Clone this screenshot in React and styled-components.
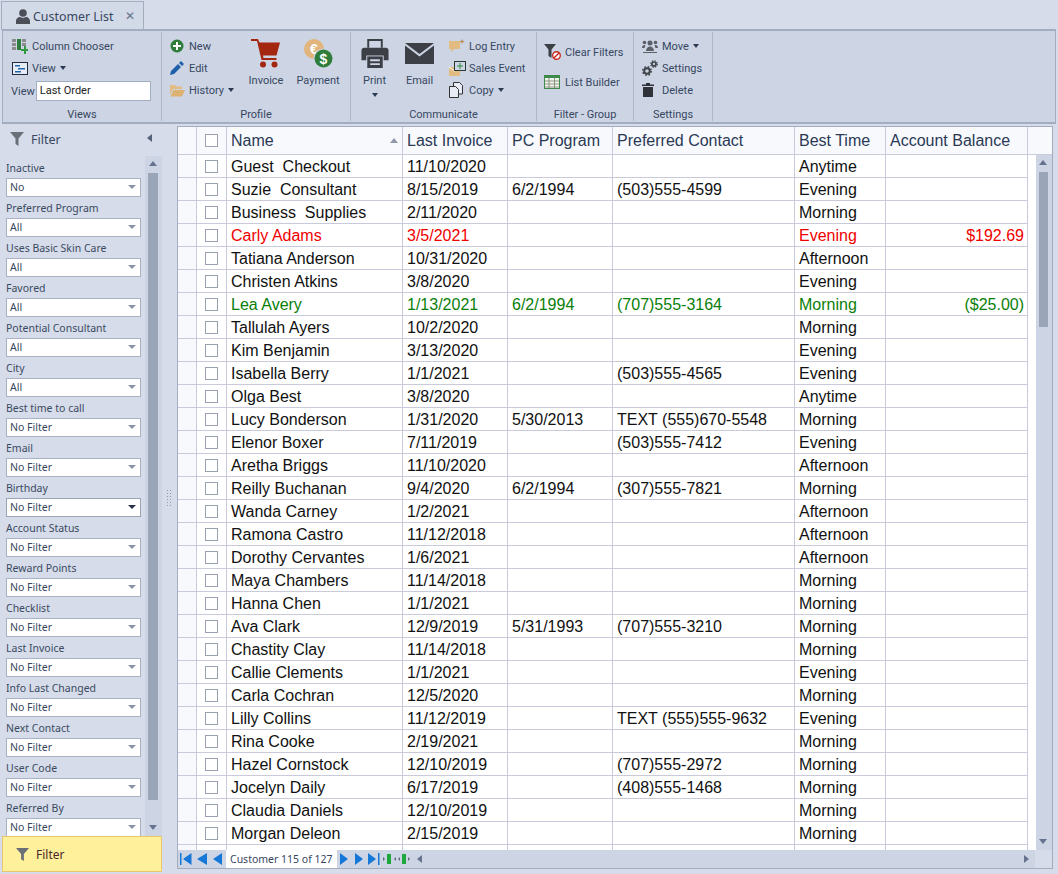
import styled, { createGlobalStyle } from "styled-components";

const GlobalStyle = createGlobalStyle`
  html, body {
    margin: 0;
    padding: 0;
    background: #d6dce9;
    overflow: hidden;
  }
  * { box-sizing: border-box; }
`;

const uiFont = `"Noto Sans", "Open Sans", sans-serif`;

const filters = [
  ["Inactive", "No"],
  ["Preferred Program", "All"],
  ["Uses Basic Skin Care", "All"],
  ["Favored", "All"],
  ["Potential Consultant", "All"],
  ["City", "All"],
  ["Best time to call", "No Filter"],
  ["Email", "No Filter"],
  ["Birthday", "No Filter", true],
  ["Account Status", "No Filter"],
  ["Reward Points", "No Filter"],
  ["Checklist", "No Filter"],
  ["Last Invoice", "No Filter"],
  ["Info Last Changed", "No Filter"],
  ["Next Contact", "No Filter"],
  ["User Code", "No Filter"],
  ["Referred By", "No Filter"],
];

const columns = [
  { title: "Name", width: 176 },
  { title: "Last Invoice", width: 105 },
  { title: "PC Program", width: 105 },
  { title: "Preferred Contact", width: 182 },
  { title: "Best Time", width: 91 },
  { title: "Account Balance", width: 142 },
];

const customers = [
  ["Guest  Checkout", "11/10/2020", "", "", "Anytime", ""],
  ["Suzie  Consultant", "8/15/2019", "6/2/1994", "(503)555-4599", "Evening", ""],
  ["Business  Supplies", "2/11/2020", "", "", "Morning", ""],
  ["Carly Adams", "3/5/2021", "", "", "Evening", "$192.69", "#f00000"],
  ["Tatiana Anderson", "10/31/2020", "", "", "Afternoon", ""],
  ["Christen Atkins", "3/8/2020", "", "", "Evening", ""],
  ["Lea Avery", "1/13/2021", "6/2/1994", "(707)555-3164", "Morning", "($25.00)", "#0a800a"],
  ["Tallulah Ayers", "10/2/2020", "", "", "Morning", ""],
  ["Kim Benjamin", "3/13/2020", "", "", "Evening", ""],
  ["Isabella Berry", "1/1/2021", "", "(503)555-4565", "Evening", ""],
  ["Olga Best", "3/8/2020", "", "", "Anytime", ""],
  ["Lucy Bonderson", "1/31/2020", "5/30/2013", "TEXT (555)670-5548", "Morning", ""],
  ["Elenor Boxer", "7/11/2019", "", "(503)555-7412", "Evening", ""],
  ["Aretha Briggs", "11/10/2020", "", "", "Afternoon", ""],
  ["Reilly Buchanan", "9/4/2020", "6/2/1994", "(307)555-7821", "Morning", ""],
  ["Wanda Carney", "1/2/2021", "", "", "Afternoon", ""],
  ["Ramona Castro", "11/12/2018", "", "", "Afternoon", ""],
  ["Dorothy Cervantes", "1/6/2021", "", "", "Afternoon", ""],
  ["Maya Chambers", "11/14/2018", "", "", "Morning", ""],
  ["Hanna Chen", "1/1/2021", "", "", "Morning", ""],
  ["Ava Clark", "12/9/2019", "5/31/1993", "(707)555-3210", "Morning", ""],
  ["Chastity Clay", "11/14/2018", "", "", "Morning", ""],
  ["Callie Clements", "1/1/2021", "", "", "Evening", ""],
  ["Carla Cochran", "12/5/2020", "", "", "Morning", ""],
  ["Lilly Collins", "11/12/2019", "", "TEXT (555)555-9632", "Evening", ""],
  ["Rina Cooke", "2/19/2021", "", "", "Morning", ""],
  ["Hazel Cornstock", "12/10/2019", "", "(707)555-2972", "Morning", ""],
  ["Jocelyn Daily", "6/17/2019", "", "(408)555-1468", "Morning", ""],
  ["Claudia Daniels", "12/10/2019", "", "", "Morning", ""],
  ["Morgan Deleon", "2/15/2019", "", "", "Morning", ""],
  ["", "", "", "", "", ""],
];

const Shell = styled.div`
  position: relative;
  width: 1058px;
  height: 874px;
  overflow: hidden;
  background: #d6dce9;
  font-family: ${uiFont};
  font-size: 11px;
  color: #2b3a52;
`;

const TabStrip = styled.div`
  height: 29px;
  padding: 1px 0 0 1px;
`;

const Tab = styled.div`
  width: 143px;
  height: 29px;
  display: flex;
  align-items: center;
  padding-left: 14px;
  gap: 3px;
  background: #d2d9e7;
  border: 1px solid #a3adc0;
  border-bottom: none;
  font-size: 12.4px;
  color: #37475f;
`;

const TabClose = styled.span`
  margin-left: 9px;
  font-size: 12px;
  line-height: 1;
  color: #66738a;
`;

const Ribbon = styled.div`
  position: absolute;
  left: 2px;
  top: 29px;
  width: 1054px;
  height: 95px;
  display: flex;
  background: #cdd5e5;
  border: 1px solid #a3adc0;
  border-width: 2px 1px;
  font-family: Roboto, "Noto Sans", sans-serif;
  font-size: 11px;
`;

const Group = styled.div`
  position: relative;
  flex: 0 0 ${(p) => p.$width}px;
  height: 89px;
  margin-top: 1px;
  padding-top: 1px;
  border-right: 1px solid #aeb8ca;
  display: flex;
  padding-left: ${(p) => p.$pad || 0}px;
`;

const GroupLabel = styled.div`
  position: absolute;
  left: 0;
  right: 0;
  top: 75px;
  text-align: center;
  line-height: 15px;
  color: #37475f;
`;

const SmallStack = styled.div`
  display: flex;
  flex-direction: column;
  padding-top: ${(p) => p.$top || 2}px;
  gap: ${(p) => p.$gap || 0}px;
  margin-left: ${(p) => p.$left || 0}px;
  width: ${(p) => (p.$width ? `${p.$width}px` : "auto")};
`;

const SmallButton = styled.div`
  height: 22px;
  display: flex;
  align-items: center;
  white-space: nowrap;
  color: #37475f;
  svg { flex: none; margin-right: ${(p) => p.$gap || 4}px; }
`;

const LargeButton = styled.div`
  width: ${(p) => p.$width}px;
  padding-top: 3px;
  display: flex;
  flex-direction: column;
  align-items: center;
  color: #37475f;
  line-height: 15px;
`;

const LargeIcon = styled.div`
  height: 37px;
  padding-bottom: 3px;
  display: flex;
  align-items: center;
  justify-content: center;
`;

const Caret = styled.span`
  display: inline-block;
  margin-left: 4px;
  width: 0;
  height: 0;
  border-left: 3.5px solid transparent;
  border-right: 3.5px solid transparent;
  border-top: 4px solid #2b3a52;
`;

const BlockCaret = styled(Caret)`
  margin: 5px 0 0;
`;

const ViewRow = styled.div`
  height: 20px;
  margin: 2px 0 0 -1px;
  display: flex;
  align-items: center;
  color: #37475f;
`;

const ViewInput = styled.div`
  width: 115px;
  height: 20px;
  margin-left: 1px;
  padding-left: 3px;
  line-height: 18px;
  background: #fff;
  border: 1px solid #a3adc0;
  color: #222;
`;

const FilterPanel = styled.div`
  position: absolute;
  left: 0;
  top: 124px;
  width: 162px;
  height: 748px;
  overflow: hidden;
`;

const PanelHead = styled.div`
  height: 30px;
  display: flex;
  align-items: center;
  padding-left: 10px;
  gap: 7px;
  font-size: 12.5px;
  color: #37475f;
`;

const CollapseArrow = styled.span`
  position: absolute;
  left: 147px;
  top: 10px;
  width: 0;
  height: 0;
  border-top: 4px solid transparent;
  border-bottom: 4px solid transparent;
  border-right: 5px solid #55627a;
`;

const FilterList = styled.div`
  position: absolute;
  left: 6px;
  top: 37px;
  width: 135px;
`;

const FilterField = styled.div`
  height: 40px;
`;

const FilterName = styled.div`
  height: 17px;
  line-height: 15px;
  font-size: 10.5px;
  color: #3a4a62;
  white-space: nowrap;
`;

const FilterSelect = styled.div`
  position: relative;
  height: 19px;
  padding-left: 3px;
  line-height: 17px;
  font-size: 10.5px;
  background: #fff;
  border: 1px solid ${(p) => (p.$active ? "#9aa5b8" : "#a8b2c4")};
  color: #37475f;
  &::after {
    content: "";
    position: absolute;
    right: 4px;
    top: 6px;
    border-left: 4px solid transparent;
    border-right: 4px solid transparent;
    border-top: 4px solid ${(p) => (p.$active ? "#26324a" : "#8b95a8")};
  }
`;

const VTrack = styled.div`
  position: absolute;
  left: ${(p) => p.$left}px;
  top: ${(p) => p.$top}px;
  width: ${(p) => p.$width}px;
  height: ${(p) => p.$height}px;
  background: ${(p) => p.$bg};
`;

const VThumb = styled.div`
  position: absolute;
  left: 3px;
  top: ${(p) => p.$top}px;
  width: ${(p) => p.$width}px;
  height: ${(p) => p.$height}px;
  background: #9aa6b8;
`;

const ArrowUp = styled.span`
  position: absolute;
  left: ${(p) => p.$left}px;
  top: ${(p) => p.$top}px;
  border-left: 4.5px solid transparent;
  border-right: 4.5px solid transparent;
  border-bottom: 5px solid #66738f;
`;

const ArrowDown = styled.span`
  position: absolute;
  left: ${(p) => p.$left}px;
  top: ${(p) => p.$top}px;
  border-left: 4.5px solid transparent;
  border-right: 4.5px solid transparent;
  border-top: 5px solid #66738f;
`;

const FilterButton = styled.div`
  position: absolute;
  left: 2px;
  top: 836px;
  width: 160px;
  height: 36px;
  display: flex;
  align-items: center;
  padding-left: 13px;
  gap: 7px;
  background: #fff09c;
  border: 1px solid #e9c66b;
  font-size: 12px;
  color: #4a2a2a;
  z-index: 2;
`;

const Grip = styled.div`
  position: absolute;
  left: 166px;
  top: 489px;
  width: 6px;
  height: 18px;
  background-image: radial-gradient(#8d98ac 0.8px, transparent 1px);
  background-size: 3px 3px;
`;

const GridFrame = styled.div`
  position: absolute;
  left: 177px;
  top: 126px;
  width: 876px;
  height: 743px;
  background: #fff;
  border: 1px solid #a3adc0;
  overflow: hidden;
`;

const GridRow = styled.div`
  display: flex;
  height: 23px;
  width: 850px;
  border-bottom: 1px solid #c9cbdc;
`;

const GridHead = styled(GridRow)`
  width: 874px;
  height: 28px;
  background: #f8f9fd;
  font-family: "Liberation Sans", Arial, sans-serif;
  font-size: 16px;
  color: #2a3a55;
`;

const Indicator = styled.div`
  flex: 0 0 19px;
  background: #f7f9fd;
  border-right: 1px solid #c9cbdc;
`;

const CheckCell = styled.div`
  flex: 0 0 30px;
  display: flex;
  align-items: center;
  justify-content: center;
  border-right: 1px solid #c9cbdc;
`;

const Check = styled.span`
  width: 13px;
  height: 13px;
  background: #fff;
  border: 1px solid #9aa2b2;
`;

const Cell = styled.div`
  position: relative;
  flex: 0 0 ${(p) => p.$width}px;
  padding: 0 3px 0 4px;
  line-height: 24px;
  white-space: pre;
  overflow: hidden;
  text-align: ${(p) => (p.$right ? "right" : "left")};
  border-right: 1px solid #c9cbdc;
`;

const HeadCell = styled(Cell)`
  line-height: 27px;
`;

const SortMark = styled.span`
  position: absolute;
  right: 4px;
  top: 11px;
  border-left: 4px solid transparent;
  border-right: 4px solid transparent;
  border-bottom: 5px solid #9099ab;
`;

const GridBody = styled.div`
  position: absolute;
  left: 0;
  top: 28px;
  width: 857px;
  height: 695px;
  overflow: hidden;
  font-family: "Liberation Sans", Arial, sans-serif;
  font-size: 16px;
`;

const BodyRow = styled(GridRow)`
  color: ${(p) => p.$color || "#111"};
`;

const NavBar = styled.div`
  position: absolute;
  left: 0;
  top: 723px;
  width: 874px;
  height: 18px;
  background: #cdd5e5;
  display: flex;
  align-items: center;
`;

const NavCorner = styled.div`
  position: absolute;
  left: 857px;
  top: 723px;
  width: 17px;
  height: 18px;
  background: #d6dce9;
`;

const NavInfo = styled.div`
  flex: none;
  width: 111px;
  height: 18px;
  margin-left: 1px;
  padding-left: 4px;
  background: #fff;
  line-height: 18px;
  font-size: 10.5px;
  white-space: nowrap;
  color: #37475f;
`;

const NavIcons = styled.svg`
  display: block;
  flex: none;
`;

const HBarArrow = styled.span`
  position: absolute;
  top: 5px;
  left: ${(p) => p.$left}px;
  border-top: 4px solid transparent;
  border-bottom: 4px solid transparent;
  ${(p) =>
    p.$dir === "right"
      ? "border-left: 5px solid #66738f;"
      : "border-right: 5px solid #66738f;"}
`;

const UserIcon = () => (
  <svg width="14" height="15" viewBox="0 0 14 15" fill="#4a4f58">
    <circle cx="7" cy="4" r="3.8" />
    <path d="M0 15v-3c0-2.5 2.500-4 4-4l3 1 3-1c1.500 0 4 1.500 4 4v3z" />
  </svg>
);

const ColumnsIcon = () => (
  <svg width="16" height="16" viewBox="0 0 16 16">
    <path d="M0 1h4v3H0zM0 5h4v3H0zM0 9h4v3H0zM10 1h4v3h-4zM10 5h4v3h-4z" fill="#8c8c8c" />
    <path d="M5 1h4v11H5z" fill="#2f7d3c" />
    <path d="M12 8h2v3h2v2h-2v3h-2v-3H9v-2h3z" fill="#2f9a3f" />
  </svg>
);

const ViewIcon = () => (
  <svg width="16" height="13" viewBox="0 0 16 13">
    <rect x="0.500" y="0.500" width="15" height="12" fill="#e8edf5" stroke="#1e2b44" />
    <path d="M3 3h5v1.500H3zM6 6h7v1.500H6zM3 9h6v1.500H3z" fill="#2166b0" />
  </svg>
);

const NewIcon = () => (
  <svg width="14" height="14" viewBox="0 0 14 14">
    <circle cx="7" cy="7" r="6.500" fill="#2e7d3a" />
    <path d="M6 3h2v3h3v2H8v3H6V8H3V6h3z" fill="#fff" />
  </svg>
);

const PencilIcon = () => (
  <svg width="14" height="14" viewBox="0 0 14 14">
    <path d="M0 14l1-4 7-7 3 3-7 7zM9 2l2-2 3 3-2 2z" fill="#1d5fa8" />
  </svg>
);

const FolderIcon = () => (
  <svg width="15" height="13" viewBox="0 0 15 13">
    <path d="M0 1h5l1 1.500h6V5H3L0 11z" fill="#e2bb80" />
    <path d="M3.500 6H15l-3 6.500H0.500z" fill="#ddb271" />
  </svg>
);

const CartIcon = () => (
  <svg width="30" height="30" viewBox="0 0 30 30">
    <path d="M0 1h7l1.500 3.500H29l-3.500 13H12l.5 2.500h13v2H10.500L6 3H0z" fill="#a3270f" />
    <circle cx="12" cy="26.500" r="3" fill="#a3270f" />
    <circle cx="23.500" cy="26.500" r="3" fill="#a3270f" />
  </svg>
);

const PaymentIcon = () => (
  <svg width="29" height="29" viewBox="0 0 29 29">
    <circle cx="10" cy="10" r="10" fill="#e2b57c" />
    <text x="10" y="15" textAnchor="middle" fontSize="14" fontWeight="700" fontFamily="Liberation Sans" fill="#fff">€</text>
    <circle cx="19.500" cy="19.500" r="10" fill="#cdd5e5" />
    <circle cx="19.500" cy="19.500" r="9" fill="#2e7d3a" />
    <text x="19.500" y="24.500" textAnchor="middle" fontSize="14" fontWeight="700" fontFamily="Liberation Sans" fill="#fff">$</text>
  </svg>
);

const PrintIcon = () => (
  <svg width="28" height="30" viewBox="0 0 28 31">
    <path d="M6 1h16v9h-2V3H8v7H6z" fill="#3c3f45" />
    <path d="M3 10h22a3 3 0 0 1 3 3v10h-5v-5H5v5H0V13a3 3 0 0 1 3-3z" fill="#3c3f45" />
    <path d="M6 19h16v12H6z" fill="#3c3f45" />
    <path d="M9 22h10v2H9zM9 26h10v2H9z" fill="#cdd5e5" />
  </svg>
);

const MailIcon = () => (
  <svg width="29" height="21" viewBox="0 0 29 21">
    <path d="M0 0h29L14.500 11z" fill="#3c3f45" />
    <path d="M0 2.500l14.500 11 14.500-11V21H0z" fill="#3c3f45" />
  </svg>
);

const LogIcon = () => (
  <svg width="16" height="14" viewBox="0 0 16 14">
    <path d="M0 2h11v8H5l-3 3v-3H0z" fill="#e2bb80" />
    <path d="M13 0l.8 1.700L15.500 2.500l-1.700.8L13 5l-.8-1.700-1.700-.8 1.700-.8z" fill="#b58b50" />
  </svg>
);

const SalesIcon = () => (
  <svg width="17" height="15" viewBox="0 0 17 15">
    <path d="M0 6h11v9H0z" fill="#e2bb80" />
    <path d="M0 6l5.500 4L11 6" fill="none" stroke="#fff" />
    <rect x="5.500" y="0.500" width="11" height="9" fill="#cdd5e5" stroke="#2b3a35" />
    <path d="M10.500 2h1v2.500H14v1h-2.500V8h-1V5.500H8v-1h2.500z" fill="#2e8b3c" />
  </svg>
);

const CopyIcon = () => (
  <svg width="14" height="16" viewBox="0 0 14 16" fill="#e8edf5" stroke="#333">
    <path d="M4.500.5h6l3 3V12h-9z" />
    <path d="M.5 4.500h6l3 3v8h-9z" />
  </svg>
);

const FunnelIcon = ({ fill = "#6a6f78", size = 14 }) => (
  <svg width={size} height={size} viewBox="0 0 14 14">
    <path d="M0 0h14L8.500 6.500V14l-3-2V6.500z" fill={fill} />
  </svg>
);

const ClearFilterIcon = () => (
  <svg width="18" height="18" viewBox="0 0 18 18">
    <path d="M0 1h12L7.500 6.500V15l-3-2V6.500z" fill="#3c3f45" />
    <circle cx="12.500" cy="12.500" r="3.800" fill="#fff" stroke="#c8281e" strokeWidth="1.400" />
    <path d="M10 15l5-5" stroke="#c8281e" strokeWidth="1.400" />
  </svg>
);

const TableIcon = () => (
  <svg width="16" height="14" viewBox="0 0 16 14">
    <rect x="0.500" y="0.500" width="15" height="13" fill="#f0f3ea" stroke="#3d8a4a" />
    <path d="M0 0h16v3H0z" fill="#3d8a4a" />
    <path d="M1 6h14M1 9h14M1 12h14M5 3v10M10.500 3v10" stroke="#76806f" strokeWidth="0.800" />
  </svg>
);

const MoveIcon = () => (
  <svg width="16" height="14" viewBox="0 0 16 14" fill="#5d6068">
    <circle cx="8" cy="4" r="2.500" />
    <path d="M4 12c0-3 2-4.500 4-4.500S12 9 12 12z" />
    <circle cx="2.500" cy="3.500" r="1.800" />
    <circle cx="13.500" cy="3.500" r="1.800" />
    <path d="M0 9c0-2 1-3 2.500-3l1 .5L2.500 9zM16 9c0-2-1-3-2.500-3l-1 .5 1 2.500z" />
    <path d="M1 13h14v1H1z" />
  </svg>
);

const GearsIcon = () => (
  <svg width="16" height="16" viewBox="0 0 16 16">
    <circle cx="5" cy="11" r="2.800" fill="none" stroke="#3f4248" strokeWidth="2" />
    <circle cx="5" cy="11" r="4.300" fill="none" stroke="#3f4248" strokeWidth="1.400" strokeDasharray="1.700 1.700" />
    <circle cx="12" cy="4" r="2" fill="none" stroke="#3f4248" strokeWidth="1.700" />
    <circle cx="12" cy="4" r="3.300" fill="none" stroke="#3f4248" strokeWidth="1.200" strokeDasharray="1.300 1.300" />
  </svg>
);

const TrashIcon = () => (
  <svg width="12" height="14" viewBox="0 0 12 14" fill="#2f3238">
    <path d="M4 0h4v1.500h4V3H0V1.500h4z" />
    <path d="M1 4h10v10H1z" />
  </svg>
);

const NavLeft = () => (
  <NavIcons width="47" height="18" viewBox="0 0 47 18">
    <path d="M2 3h1.500v12H2zM13.500 3v12L5 9zM29 3v12l-10-6zM44 3v12l-9-6z" fill="#1578d8" />
  </NavIcons>
);

const NavRight = () => (
  <NavIcons width="80" height="18" viewBox="0 0 80 18">
    <path d="M3 3v12l8-6zM18 3v12l8-6zM31 3v12l8-6zM41 3h1.500v12H41z" fill="#1578d8" />
    <path d="M46 7v4l2-2zM59 7v4l-2-2zM63 7v4l-2-2zM71 7v4l2-2z" fill="#5d6a80" />
    <path d="M50 4h4v10h-4zM65 4h4v10h-4z" fill="#1ea83c" />
  </NavIcons>
);

export default function App() {
  return (
    <Shell>
      <GlobalStyle />
      <TabStrip>
        <Tab>
          <UserIcon />
          Customer List
          <TabClose>✕</TabClose>
        </Tab>
      </TabStrip>

      <Ribbon>
        <Group $width={159} $pad={9}>
          <SmallStack>
            <SmallButton $gap={4}><ColumnsIcon />Column Chooser</SmallButton>
            <SmallButton $gap={4}><ViewIcon />View<Caret /></SmallButton>
            <ViewRow>View<ViewInput>Last Order</ViewInput></ViewRow>
          </SmallStack>
          <GroupLabel>Views</GroupLabel>
        </Group>

        <Group $width={189} $pad={8}>
          <SmallStack $width={69}>
            <SmallButton $gap={5}><NewIcon />New</SmallButton>
            <SmallButton $gap={5}><PencilIcon />Edit</SmallButton>
            <SmallButton $gap={4}><FolderIcon />History<Caret /></SmallButton>
          </SmallStack>
          <LargeButton $width={54}>
            <LargeIcon><CartIcon /></LargeIcon>
            <span>Invoice</span>
          </LargeButton>
          <LargeButton $width={50}>
            <LargeIcon><PaymentIcon /></LargeIcon>
            <span>Payment</span>
          </LargeButton>
          <GroupLabel>Profile</GroupLabel>
        </Group>

        <Group $width={186} $pad={1}>
          <LargeButton $width={45}>
            <LargeIcon><PrintIcon /></LargeIcon>
            <span>Print</span>
            <BlockCaret />
          </LargeButton>
          <LargeButton $width={45}>
            <LargeIcon><MailIcon /></LargeIcon>
            <span>Email</span>
          </LargeButton>
          <SmallStack $left={7}>
            <SmallButton $gap={4}><LogIcon />Log Entry</SmallButton>
            <SmallButton $gap={3}><SalesIcon />Sales Event</SmallButton>
            <SmallButton $gap={6}><CopyIcon />Copy<Caret /></SmallButton>
          </SmallStack>
          <GroupLabel>Communicate</GroupLabel>
        </Group>

        <Group $width={97} $pad={7}>
          <SmallStack $top={8} $gap={8}>
            <SmallButton $gap={3}><ClearFilterIcon />Clear Filters</SmallButton>
            <SmallButton $gap={5}><TableIcon />List Builder</SmallButton>
          </SmallStack>
          <GroupLabel>Filter - Group</GroupLabel>
        </Group>

        <Group $width={79} $pad={8}>
          <SmallStack>
            <SmallButton $gap={4}><MoveIcon />Move<Caret /></SmallButton>
            <SmallButton $gap={4}><GearsIcon />Settings</SmallButton>
            <SmallButton $gap={8}><TrashIcon />Delete</SmallButton>
          </SmallStack>
          <GroupLabel>Settings</GroupLabel>
        </Group>
      </Ribbon>

      <FilterPanel>
        <PanelHead>
          <FunnelIcon />
          Filter
        </PanelHead>
        <CollapseArrow />
        <FilterList>
          {filters.map(([name, value, active]) => (
            <FilterField key={name}>
              <FilterName>{name}</FilterName>
              <FilterSelect $active={active}>{value}</FilterSelect>
            </FilterField>
          ))}
        </FilterList>
        <VTrack $left={145} $top={32} $width={17} $height={680} $bg="#cdd5e5">
          <ArrowUp $left={4} $top={5} />
          <VThumb $top={17} $width={10} $height={627} />
          <ArrowDown $left={4} $top={669} />
        </VTrack>
      </FilterPanel>

      <FilterButton>
        <FunnelIcon size={13} />
        Filter
      </FilterButton>

      <Grip />

      <GridFrame>
        <GridHead>
          <Indicator />
          <CheckCell><Check /></CheckCell>
          {columns.map((col, i) => (
            <HeadCell key={col.title} $width={col.width}>
              {col.title}
              {i === 0 && <SortMark />}
            </HeadCell>
          ))}
        </GridHead>
        <GridBody>
          {customers.map((row, r) => (
            <BodyRow key={r} $color={row[6]}>
              <Indicator />
              <CheckCell><Check /></CheckCell>
              {columns.map((col, i) => (
                <Cell key={col.title} $width={col.width} $right={i === 5}>
                  {row[i]}
                </Cell>
              ))}
            </BodyRow>
          ))}
        </GridBody>
        <VTrack $left={858} $top={28} $width={16} $height={695} $bg="#cdd5e5">
          <ArrowUp $left={3} $top={5} />
          <VThumb $top={17} $width={9} $height={155} />
          <ArrowDown $left={3} $top={684} />
        </VTrack>
        <NavBar>
          <NavLeft />
          <NavInfo>Customer 115 of 127</NavInfo>
          <NavRight />
          <HBarArrow $left={239} $dir="left" />
          <HBarArrow $left={846} $dir="right" />
        </NavBar>
        <NavCorner />
      </GridFrame>
    </Shell>
  );
}
